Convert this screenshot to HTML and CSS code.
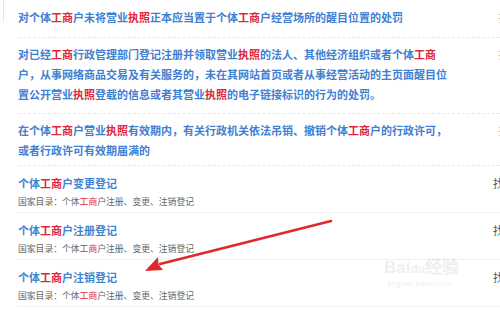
FILE: index.html
```html
<!DOCTYPE html>
<html lang="zh-CN">
<head>
<meta charset="utf-8">
<link rel="stylesheet" href="styles.css">
</head>
<body>
<div class="page">
  <div class="edge"></div>
  <ul class="list">
    <li class="item law first">
      <p class="law-text">对个体<em>工商</em>户未将营业<em>执照</em>正本应当置于个体<em>工商</em>户经营场所的醒目位置的处罚</p>
      <span class="side faint">找</span>
    </li>
    <li class="item law second">
      <p class="law-text">对已经<em>工商</em>行政管理部门登记注册并领取营业<em>执照</em>的法人、其他经济组织或者个体<em>工商</em><br>户，从事网络商品交易及有关服务的，未在其网站首页或者从事经营活动的主页面醒目位<br>置公开营业<em>执照</em>登载的信息或者其营业<em>执照</em>的电子链接标识的行为的处罚。</p>
      <span class="side faint">找</span>
    </li>
    <li class="item law third">
      <p class="law-text">在个体<em>工商</em>户营业<em>执照</em>有效期内，有关行政机关依法吊销、撤销个体<em>工商</em>户的行政许可，<br>或者行政许可有效期届满的</p>
      <span class="side faint">找</span>
    </li>
    <li class="item reg">
      <div class="reg-body">
        <p class="reg-title">个体<em>工商</em>户变更登记</p>
        <p class="reg-sub">国家目录：个体<em>工商</em>户注册、变更、注销登记</p>
      </div>
      <span class="side">找</span>
    </li>
    <li class="item reg">
      <div class="reg-body">
        <p class="reg-title">个体<em>工商</em>户注册登记</p>
        <p class="reg-sub">国家目录：个体<em>工商</em>户注册、变更、注销登记</p>
      </div>
      <span class="side">找</span>
    </li>
    <li class="item reg">
      <div class="reg-body">
        <p class="reg-title">个体<em>工商</em>户注销登记</p>
        <p class="reg-sub">国家目录：个体<em>工商</em>户注册、变更、注销登记</p>
      </div>
      <span class="side">找</span>
    </li>
  </ul>
  <div class="watermark">
    <span class="wm-brand">Bai<span class="wm-paw">du</span>经验</span>
    <span class="wm-url">jingyan.baidu.com</span>
  </div>
  <svg class="arrow" width="500" height="310" viewBox="0 0 500 310">
    <path d="M331 221 L160 264" stroke="#e2282a" stroke-width="2.6" stroke-linecap="round" fill="none"/>
    <path d="M145 271 L158 257 L158.5 264.5 L163 270 Z" fill="#e2282a"/>
  </svg>
</div>
</body>
</html>
```
FILE: styles.css
```css
html, body {
  margin: 0;
  padding: 0;
  background: #ffffff;
}
body {
  width: 500px;
  height: 310px;
  overflow: hidden;
  font-family: "Noto Sans CJK SC", "Noto Sans", sans-serif;
}
.page {
  position: relative;
  width: 500px;
  height: 310px;
}
.edge {
  position: absolute;
  left: 3px;
  top: 0;
  width: 1px;
  height: 22px;
  background: #e4e6ea;
}
.list {
  list-style: none;
  margin: 0;
  padding: 0 0 0 18px;
}
.item {
  display: flex;
  align-items: flex-start;
  border-bottom: 1px dashed #e6e8ec;
}
p {
  margin: 0;
}
em {
  font-style: normal;
  color: #e0283c;
}
.law-text {
  font-size: 11px;
  line-height: 20px;
  font-weight: bold;
  color: #3f80d2;
  white-space: nowrap;
}
.first {
  padding: 7px 0 10px;
}
.second {
  padding: 6px 0 9px;
}
.third {
  padding: 6px 0 5px;
}
.reg {
  padding: 10px 0 3px;
  border-bottom-style: solid;
  border-bottom-color: #eef0f2;
}
.reg-title {
  font-size: 11px;
  line-height: 14px;
  font-weight: bold;
  color: #3f84d4;
}
.reg-sub {
  margin-top: 5px;
  font-size: 8.8px;
  line-height: 14px;
  color: #666666;
}
.side {
  margin-left: auto;
  margin-right: -4px;
  font-size: 11px;
  line-height: 14px;
  color: #555555;
}
.law .side {
  margin-right: -9px;
  line-height: 20px;
  color: #c8c8c8;
}
.watermark {
  position: absolute;
  left: 384px;
  top: 258px;
  display: flex;
  flex-direction: column;
  color: rgba(200, 200, 200, 0.3);
  font-family: "Liberation Sans", sans-serif;
}
.wm-brand {
  font-size: 17px;
  line-height: 20px;
  font-weight: bold;
}
.wm-paw {
  font-size: 12px;
}
.wm-url {
  font-size: 8px;
  line-height: 10px;
  margin-left: 4px;
}
.arrow {
  position: absolute;
  left: 0;
  top: 0;
  pointer-events: none;
}
```
